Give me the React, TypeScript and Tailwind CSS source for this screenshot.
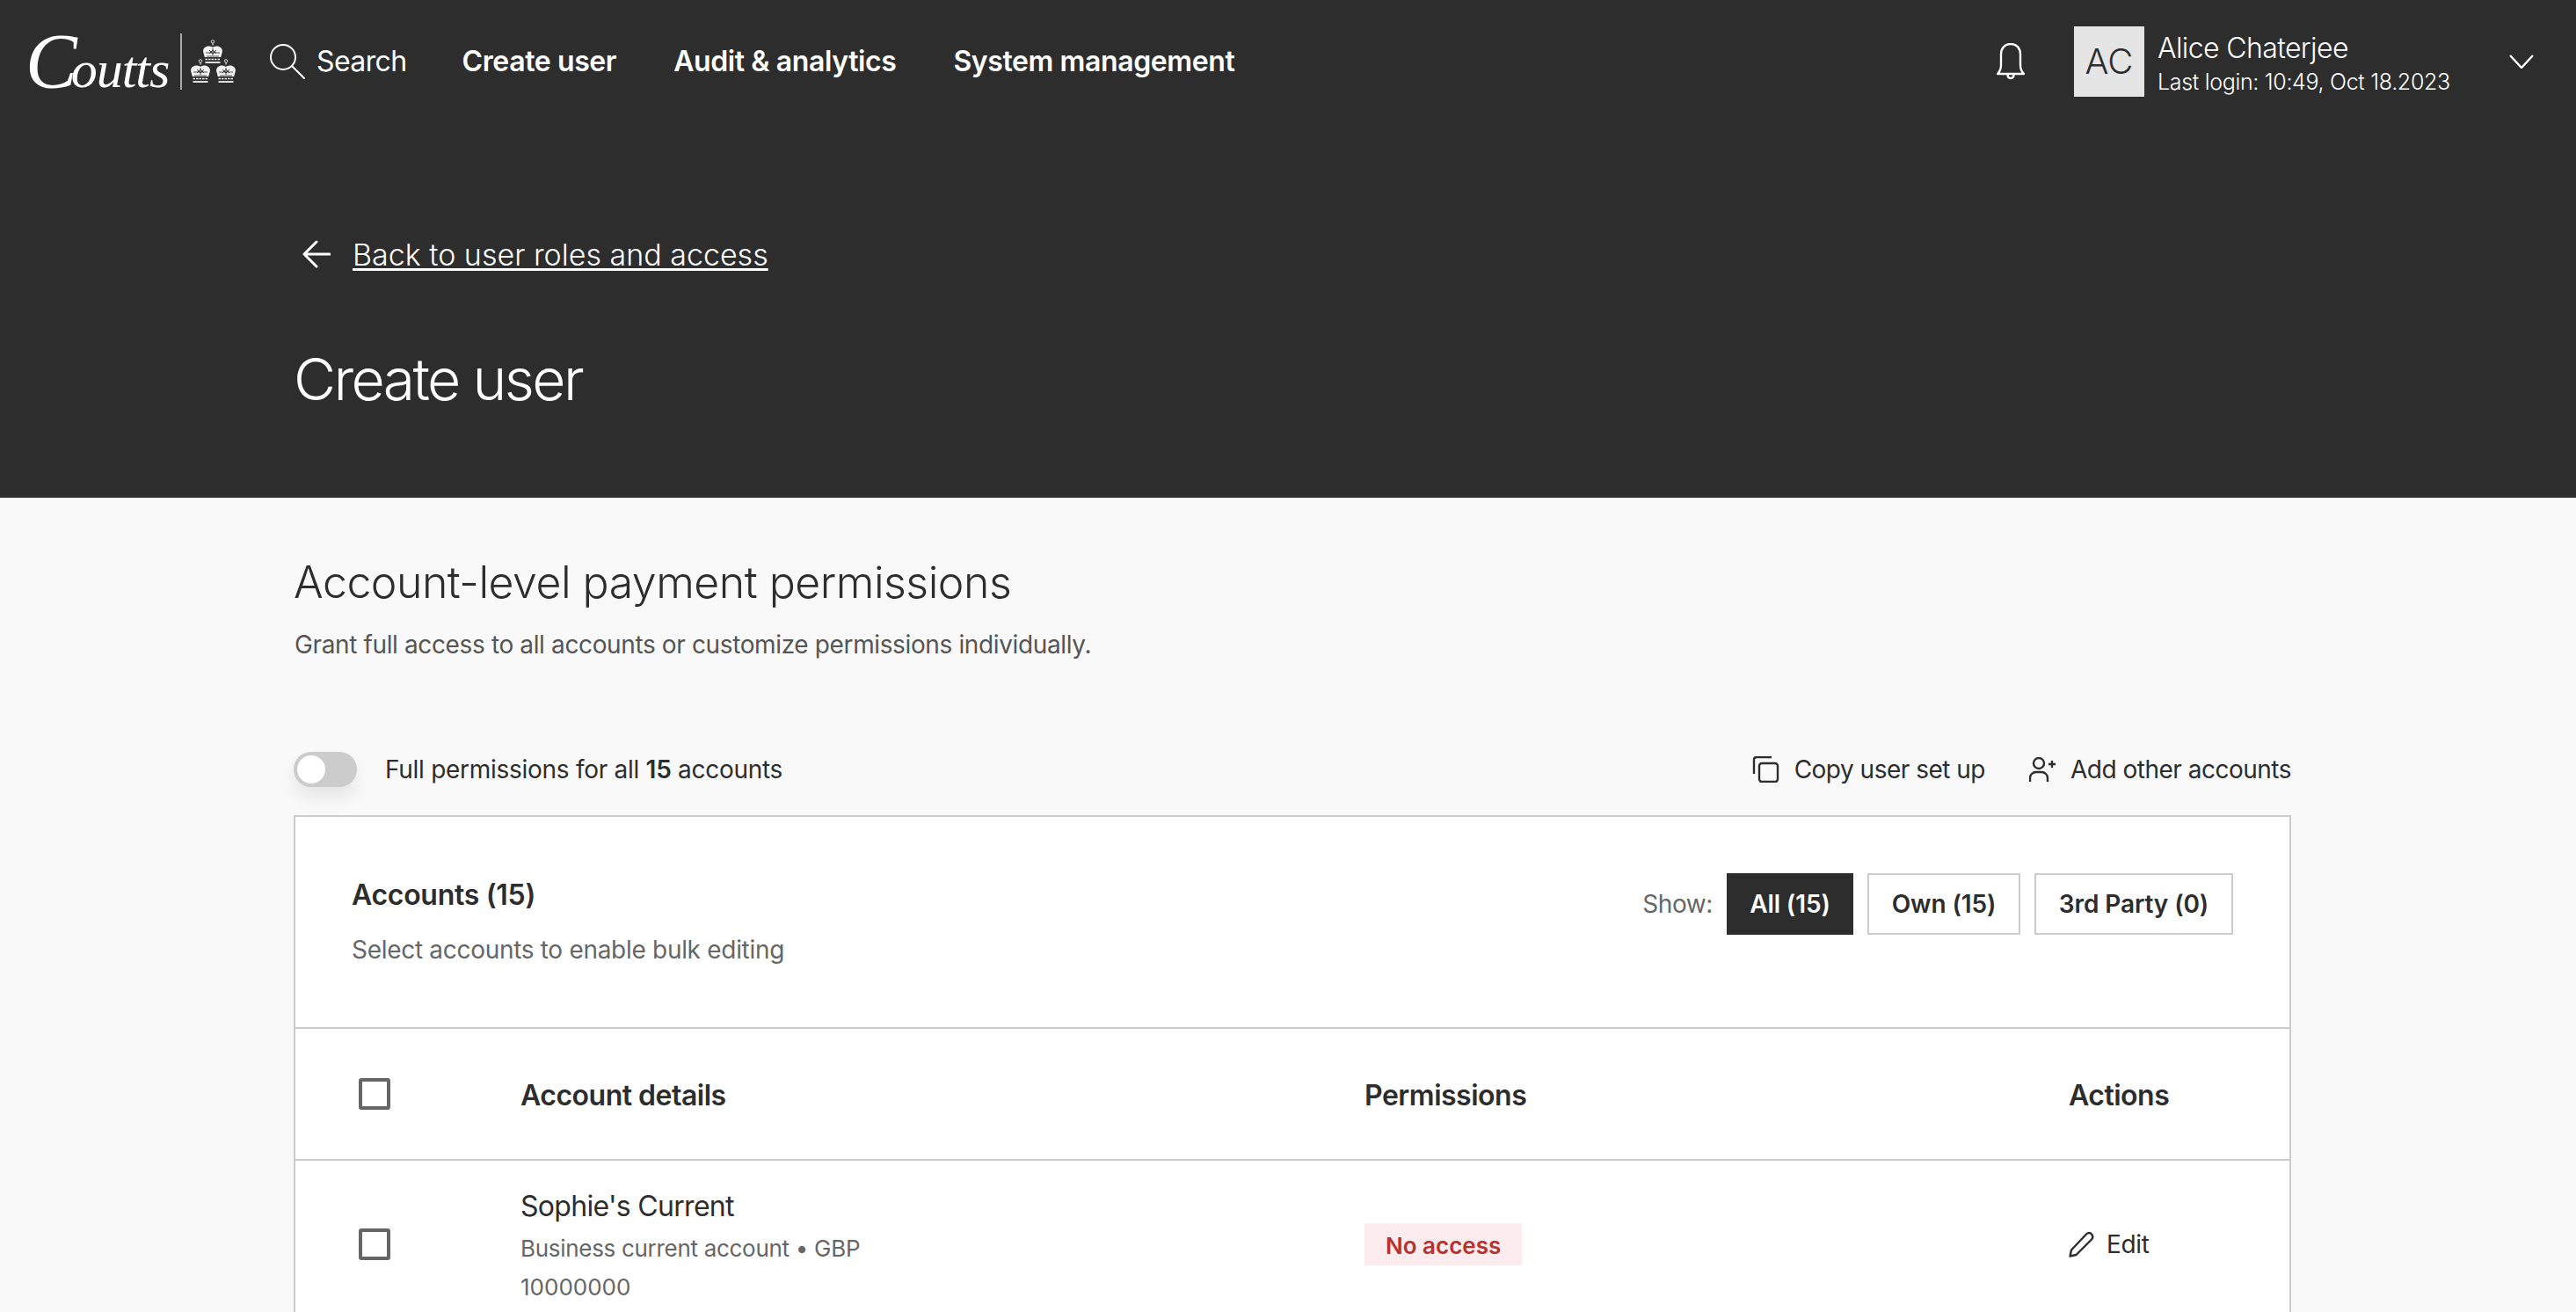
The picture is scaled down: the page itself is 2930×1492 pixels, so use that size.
function Crown({ className }: { className?: string }) {
  return (
    <svg viewBox="0 0 24 28" className={className} fill="none">
      <circle cx="12" cy="2.400" r="1.700" stroke="#f2f2f2" strokeWidth="0.900" />
      <path d="M12 4.400v2" stroke="#f2f2f2" strokeWidth="1.200" />
      <path
        d="M1.600 15.500C-0.400 10.500 4 7 8 7.600c1.600.2 3 .6 4 1.400 1-.8 2.400-1.200 4-1.400 4-.6 8.400 2.900 6.400 7.900l-1.200 4.500H2.800z"
        fill="#f2f2f2"
      />
      <path d="M4 15h16M5 19h14" stroke="#2d2d2d" strokeWidth="0.800" />
      <path d="M8 12l4 4 4-4M8 16l4-4 4 4M12 10v8" stroke="#2d2d2d" strokeWidth="0.900" />
      <path d="M3.500 22.500h17" stroke="#f2f2f2" strokeWidth="1.500" strokeDasharray="2.500 1" />
      <path d="M3.500 26h17" stroke="#f2f2f2" strokeWidth="1.800" />
    </svg>
  )
}

function Logo() {
  return (
    <div className="flex items-center">
      <div className="w-[205px] pl-[29px] h-[64px] flex items-center">
        <span className="font-['Liberation_Serif',serif] italic text-white leading-none whitespace-nowrap">
          <span className="text-[88px] tracking-[-7px]">C</span>
          <span className="text-[60px] tracking-[-1px]">outts</span>
        </span>
      </div>
      <div className="w-[2px] h-[64px] bg-[#aaaaaa]" />
      <div className="ml-[9px] w-[54px] h-[50px] relative">
        <Crown className="absolute left-[14px] top-[0px] w-[24px] h-[28px]" />
        <Crown className="absolute left-[0px] top-[22px] w-[24px] h-[28px]" />
        <Crown className="absolute left-[29px] top-[22px] w-[24px] h-[28px]" />
      </div>
    </div>
  )
}

function SearchIcon() {
  return (
    <svg viewBox="0 0 40 40" className="w-[40px] h-[40px]" fill="none" stroke="#ffffff" strokeWidth="2">
      <circle cx="15" cy="15" r="14" />
      <path d="M25 25l15 15" />
    </svg>
  )
}

function BellIcon() {
  return (
    <svg viewBox="0 0 32 42" className="w-[32px] h-[42px]" fill="none" stroke="#ffffff" strokeWidth="2.400">
      <path d="M1 35c3-3 4-6 4-10V13C5 6 9 1 16 1s11 5 11 12v12c0 4 1 7 4 10z" strokeLinejoin="round" />
      <path d="M12.500 35.500c0 6 7 6 7 0" />
    </svg>
  )
}

function BackArrow() {
  return (
    <svg viewBox="0 0 32 32" className="w-[32px] h-[32px]" fill="none" stroke="#ffffff" strokeWidth="3" strokeLinecap="round" strokeLinejoin="round">
      <path d="M31 16H2M16 2L2 16l14 14" />
    </svg>
  )
}

function CopyIcon() {
  return (
    <svg viewBox="0 0 32 30" className="w-[32px] h-[30px]" fill="none" stroke="#2d2d2d" strokeWidth="2.400">
      <rect x="9" y="8" width="21" height="21" rx="3" />
      <path d="M3 20V4c0-1.500 1-3 3-3h17" />
    </svg>
  )
}

function AddUserIcon() {
  return (
    <svg viewBox="0 0 30 28" className="w-[30px] h-[28px]" fill="none" stroke="#2d2d2d" strokeWidth="2.400">
      <circle cx="11" cy="7" r="6" />
      <path d="M1 28v-4c0-4 3-7 7-7h6c4 0 7 3 7 7v4" />
      <path d="M22 8h8M26 4v8" />
    </svg>
  )
}

function PencilIcon() {
  return (
    <svg viewBox="0 0 30 30" className="w-[30px] h-[30px]" fill="none" stroke="#2d2d2d" strokeWidth="2.400" strokeLinejoin="round">
      <path d="M1.500 28.500l1.500-7L20 3.500c2-2 4.500-2 6 0s2 4 0 6L8.500 27z" />
    </svg>
  )
}

function Box() {
  return <div className="w-[36px] h-[36px] rounded-[3px] border-[4px] border-[#666666] bg-white" />
}

function FilterButton({ label, width, active }: { label: string; width: string; active?: boolean }) {
  return (
    <div
      className={`${width} h-[70px] flex items-center justify-center text-[28px] tracking-[-0.1px] font-semibold border-[2px] ${
        active ? 'bg-[#2d2d2d] border-[#2d2d2d] text-white' : 'bg-white border-[#cccccc] text-[#2d2d2d]'
      }`}
    >
      {label}
    </div>
  )
}

export default function App() {
  return (
    <div className="w-[2930px] h-[1492px] overflow-hidden bg-[#f9f9f9] font-['Inter',sans-serif] text-[#2d2d2d]">
      <header className="bg-[#2d2d2d] h-[566px] text-white">
        <nav className="h-[140px] flex items-center pr-[48px]">
          <Logo />
          <div className="ml-[37px] flex items-center gap-[13px]">
            <SearchIcon />
            <span className="text-[32px] tracking-[-0.6px]">Search</span>
          </div>
          <div className="ml-[63px] flex items-center gap-[65px] text-[32px] tracking-[-0.4px] font-semibold">
            <a>Create user</a>
            <a>Audit &amp; analytics</a>
            <a>System management</a>
          </div>
          <div className="ml-auto flex items-center">
            <BellIcon />
            <div className="ml-[56px] w-[80px] h-[80px] bg-[#e5e5e5] text-[#2d2d2d] flex items-center justify-center text-[40px] font-light">
              AC
            </div>
            <div className="ml-[15px] w-[400px] pt-[6px]">
              <div className="text-[32px] leading-[40px] font-light tracking-[-0.6px]">Alice Chaterjee</div>
              <div className="text-[25px] leading-[36px] font-light tracking-[-0.32px]">Last login: 10:49, Oct 18.2023</div>
            </div>
            <svg viewBox="0 0 28 16" className="w-[28px] h-[16px]" fill="none" stroke="#ffffff" strokeWidth="2.400">
              <path d="M1 1l13 14L27 1" />
            </svg>
          </div>
        </nav>
        <div className="pl-[334px]">
          <div className="pt-[134px] flex items-center h-[164px]">
            <div className="ml-[10px]">
              <BackArrow />
            </div>
            <a className="ml-[25px] text-[34px] font-light underline underline-offset-[3px] decoration-[3px]">
              Back to user roles and access
            </a>
          </div>
          <h1 className="mt-[87px] text-[66px] leading-[80px] font-light tracking-[-2.600px]">Create user</h1>
        </div>
      </header>

      <main className="pl-[334px] pr-[324px]">
        <h2 className="pt-[64px] text-[50px] leading-[64px] font-light tracking-[-0.5px]">Account-level payment permissions</h2>
        <p className="mt-[19px] pl-[1px] text-[28px] leading-[40px] text-[#555555] tracking-[-0.37px]">
          Grant full access to all accounts or customize permissions individually.
        </p>

        <div className="mt-[102px] h-[40px] flex items-center text-[28px] tracking-[-0.28px]">
          <div className="relative w-[72px] h-[40px] rounded-full bg-[#cccccc] shadow-[0_12px_20px_rgba(0,0,0,0.08)]">
            <div className="absolute left-[4px] top-[4px] w-[32px] h-[32px] rounded-full bg-white" />
          </div>
          <span className="ml-[32px]">
            Full permissions for all <b className="font-semibold">15</b> accounts
          </span>
          <div className="ml-auto flex items-center tracking-[-0.5px]">
            <div className="ml-[2px]">
              <CopyIcon />
            </div>
            <span className="ml-[17px]">Copy user set up</span>
            <div className="ml-[50px]">
              <AddUserIcon />
            </div>
            <span className="ml-[17px]">Add other accounts</span>
          </div>
        </div>

        <section className="mt-[32px] bg-white border-[2px] border-[#cccccc]">
          <div className="h-[241px] px-[64px] flex border-b-[2px] border-[#cccccc]">
            <div className="pt-[64px]">
              <div className="text-[32px] leading-[50px] font-semibold tracking-[-0.3px]">Accounts (15)</div>
              <div className="mt-[17px] text-[28px] leading-[40px] text-[#666666] tracking-[-0.3px]">Select accounts to enable bulk editing</div>
            </div>
            <div className="ml-auto pt-[64px] flex items-start">
              <div className="flex items-center gap-[16px]">
                <span className="text-[28px] text-[#666666] tracking-[-0.4px]">Show:</span>
                <FilterButton label="All (15)" width="w-[144px]" active />
                <FilterButton label="Own (15)" width="w-[174px]" />
                <FilterButton label="3rd Party (0)" width="w-[226px]" />
              </div>
            </div>
          </div>
          <div className="grid grid-cols-[256px_960px_801px_1fr] h-[150px] items-center border-b-[2px] border-[#cccccc] text-[32px] font-semibold tracking-[-0.5px]">
            <div className="pl-[72px]">
              <Box />
            </div>
            <div className="pt-[3px]">Account details</div>
            <div className="pt-[3px]">Permissions</div>
            <div className="pt-[3px]">Actions</div>
          </div>
          <div className="grid grid-cols-[256px_960px_801px_1fr] items-center h-[190px]">
            <div className="pl-[72px]">
              <Box />
            </div>
            <div className="pt-[3px]">
              <div className="text-[32px] leading-[44px] tracking-[-0.7px]">Sophie&apos;s Current</div>
              <div className="mt-[6px] text-[26px] leading-[40px] text-[#666666] tracking-[-0.3px]">Business current account • GBP</div>
              <div className="mt-[4px] text-[26px] leading-[40px] text-[#666666]">10000000</div>
            </div>
            <div>
              <span className="inline-flex items-center h-[48px] px-[24px] pt-[2px] bg-[#fdecee] text-[#b8322f] text-[26px] font-semibold">
                No access
              </span>
            </div>
            <div className="flex items-center gap-[13px] text-[28px] tracking-[-0.3px]">
              <PencilIcon />
              <span>Edit</span>
            </div>
          </div>
        </section>
      </main>
    </div>
  )
}
